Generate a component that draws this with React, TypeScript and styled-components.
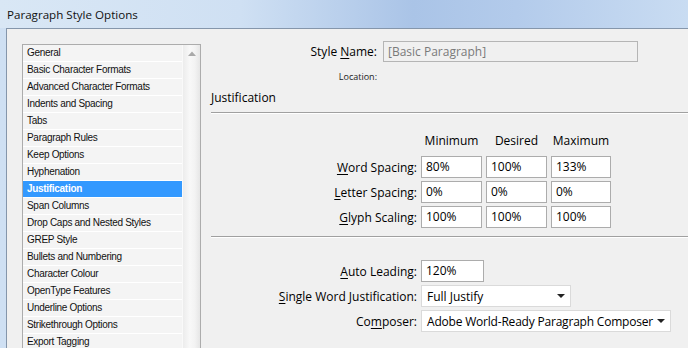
import React from 'react';
import styled, { createGlobalStyle } from 'styled-components';

const GlobalStyle = createGlobalStyle`
  html, body {
    margin: 0;
    padding: 0;
    width: 688px;
    height: 348px;
    overflow: hidden;
    background: #f0f0f0;
  }
`;

const Window = styled.div`
  display: flex;
  flex-direction: column;
  width: 688px;
  height: 348px;
  overflow: hidden;
  background: linear-gradient(90deg, #cfe0f3 0%, #c2d7ef 100%);
  font-family: 'Open Sans', 'Noto Sans', sans-serif;
  color: #000;
`;

const TitleBar = styled.div`
  height: 28px;
  flex-shrink: 0;
  display: flex;
  align-items: center;
  padding-left: 7px;
  font-size: 11.6px;
  color: #111;
  background: linear-gradient(
    90deg,
    #d9e7f5 0%,
    #cfe0f3 35%,
    #aac4e7 60%,
    #b3cbeb 75%,
    #c9dcf2 100%
  );
`;

const Frame = styled.div`
  flex: 1;
  display: flex;
  padding-left: 6px;
  min-height: 0;
`;

const Body = styled.div`
  flex: 1;
  display: flex;
  gap: 10px;
  padding: 15px 0 0 15px;
  background: #f0f0f0;
  border-top: 1px solid #8596ab;
  border-left: 1px solid #8596ab;
  min-height: 0;
`;

const ListBox = styled.div`
  width: 177px;
  flex-shrink: 0;
  display: flex;
  border: 1px solid #acacac;
  border-bottom: none;
  background: #fff;
  align-self: flex-start;
`;

const Items = styled.div`
  flex: 1;
  display: flex;
  flex-direction: column;
`;

const Item = styled.div<{ $selected?: boolean }>`
  height: 16px;
  line-height: 16px;
  padding-left: 4px;
  border-bottom: 1px solid #fff;
  font-family: 'Liberation Sans', Arial, sans-serif;
  font-size: 10px;
  letter-spacing: -0.3px;
  white-space: nowrap;
  background: ${(p) => (p.$selected ? '#3399ff' : '#f4f4f4')};
  color: ${(p) => (p.$selected ? '#fff' : '#111')};
  font-weight: ${(p) => (p.$selected ? 'bold' : 'normal')};
`;

const ScrollTrack = styled.div`
  width: 17px;
  display: flex;
  justify-content: center;
  padding-top: 6px;
  background: linear-gradient(90deg, #ececec 0%, #f8f8f8 40%, #f3f3f3 70%, #e6e6e6 100%);
  border-left: 1px solid #f9f9f9;
`;

const Panel = styled.div`
  flex: 1;
  display: flex;
  flex-direction: column;
  font-size: 12px;
`;

const NameRow = styled.div`
  display: grid;
  grid-template-columns: 166px 255px;
  column-gap: 6px;
  align-items: center;
  margin-top: -3px;
`;

const Label = styled.span`
  text-align: right;
  white-space: nowrap;
`;

const Key = styled.span`
  text-decoration: underline;
  text-underline-offset: 2px;
`;

const NameInput = styled.div`
  height: 19px;
  border: 1px solid #b5b5b5;
  background: #f0f0f0;
  color: #7a7a7a;
  padding-left: 4px;
  line-height: 19px;
`;

const Location = styled.div`
  width: 166px;
  text-align: right;
  font-size: 9px;
  margin-top: 8px;
  color: #222;
`;

const SectionTitle = styled.div`
  margin-top: 6px;
  font-size: 12px;
`;

const Rule = styled.div<{ $top: number }>`
  height: 1px;
  margin-top: ${(p) => p.$top}px;
  background: #a0a0a0;
  border-bottom: 1px solid #fff;
`;

const SpacingGrid = styled.div`
  display: grid;
  grid-template-columns: 206px 61px 61px 60px;
  column-gap: 4px;
  row-gap: 3px;
  align-items: center;
  margin-top: 18px;
`;

const Head = styled.span`
  text-align: center;
  padding-bottom: 4px;
`;

const Field = styled.div<{ $width?: number }>`
  box-sizing: border-box;
  height: 22px;
  line-height: 20px;
  border: 1px solid #acacac;
  background: #fff;
  padding-left: 4px;
  width: ${(p) => (p.$width ? `${p.$width}px` : 'auto')};
  white-space: nowrap;
`;

const OptionGrid = styled.div`
  display: grid;
  grid-template-columns: 206px auto;
  column-gap: 4px;
  row-gap: 3px;
  align-items: center;
  justify-items: start;
  margin-top: 22px;

  & > ${Label} {
    justify-self: end;
  }
`;

const Select = styled.div<{ $width: number; $tight?: boolean }>`
  box-sizing: border-box;
  height: 22px;
  width: ${(p) => p.$width}px;
  display: flex;
  align-items: center;
  justify-content: space-between;
  padding: 0 4px 0 5px;
  background: #fff;
  border: 1px solid #dadada;
  white-space: nowrap;
  letter-spacing: ${(p) => (p.$tight ? '-0.2px' : '0')};
`;

const Caret = styled.span`
  width: 0;
  height: 0;
  border-left: 4px solid transparent;
  border-right: 4px solid transparent;
  border-top: 4px solid #222;
  margin-right: 1px;
`;

const categories = [
  'General',
  'Basic Character Formats',
  'Advanced Character Formats',
  'Indents and Spacing',
  'Tabs',
  'Paragraph Rules',
  'Keep Options',
  'Hyphenation',
  'Justification',
  'Span Columns',
  'Drop Caps and Nested Styles',
  'GREP Style',
  'Bullets and Numbering',
  'Character Colour',
  'OpenType Features',
  'Underline Options',
  'Strikethrough Options',
  'Export Tagging',
];

const spacingRows = [
  { key: 'W', rest: 'ord Spacing:', values: ['80%', '100%', '133%'] },
  { key: 'L', rest: 'etter Spacing:', values: ['0%', '0%', '0%'] },
  { key: 'G', rest: 'lyph Scaling:', values: ['100%', '100%', '100%'] },
];

const App: React.FC = () => {
  return (
    <>
      <GlobalStyle />
      <Window>
        <TitleBar>Paragraph Style Options</TitleBar>
        <Frame>
          <Body>
            <ListBox>
              <Items>
                {categories.map((c) => (
                  <Item key={c} $selected={c === 'Justification'}>
                    {c}
                  </Item>
                ))}
              </Items>
              <ScrollTrack>
                <svg width="8" height="5" viewBox="0 0 8 5">
                  <path d="M0 5 L4 0.5 L8 5 Z" fill="#a9a9a9" />
                </svg>
              </ScrollTrack>
            </ListBox>
            <Panel>
              <NameRow>
                <Label>
                  Style <Key>N</Key>ame:
                </Label>
                <NameInput>[Basic Paragraph]</NameInput>
              </NameRow>
              <Location>Location:</Location>
              <SectionTitle>Justification</SectionTitle>
              <Rule $top={6} />
              <SpacingGrid>
                <span />
                <Head>Minimum</Head>
                <Head>Desired</Head>
                <Head>Maximum</Head>
                {spacingRows.map((r) => (
                  <React.Fragment key={r.key}>
                    <Label>
                      <Key>{r.key}</Key>
                      {r.rest}
                    </Label>
                    {r.values.map((v, i) => (
                      <Field key={i}>{v}</Field>
                    ))}
                  </React.Fragment>
                ))}
              </SpacingGrid>
              <Rule $top={8} />
              <OptionGrid>
                <Label>
                  <Key>A</Key>uto Leading:
                </Label>
                <Field $width={63}>120%</Field>
                <Label>
                  <Key>S</Key>ingle Word Justification:
                </Label>
                <Select $width={150}>
                  Full Justify
                  <Caret />
                </Select>
                <Label>
                  Co<Key>m</Key>poser:
                </Label>
                <Select $width={250} $tight>
                  Adobe World-Ready Paragraph Composer
                  <Caret />
                </Select>
              </OptionGrid>
            </Panel>
          </Body>
        </Frame>
      </Window>
    </>
  );
};

export default App;
